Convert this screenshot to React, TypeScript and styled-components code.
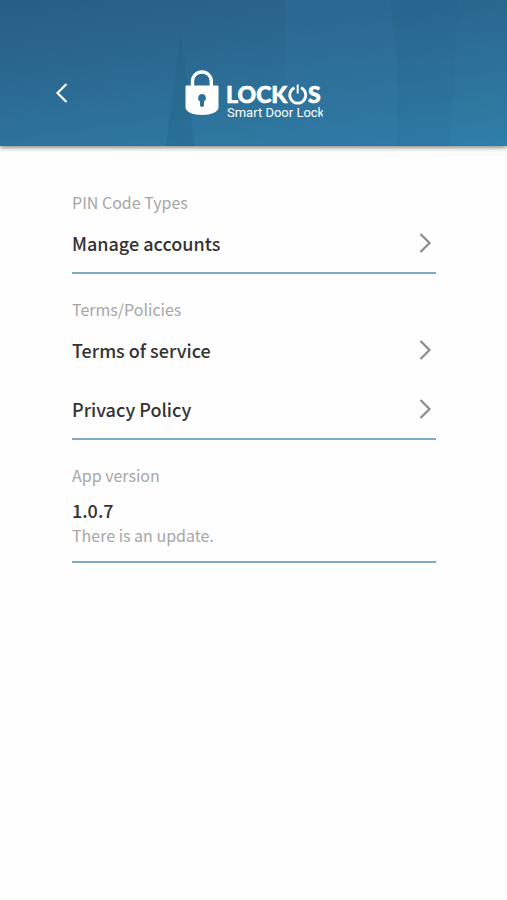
import React from "react";
import styled, { createGlobalStyle } from "styled-components";

const GlobalStyle = createGlobalStyle`
  *, *::before, *::after { box-sizing: border-box; }
  body {
    margin: 0;
    background: #fefefe;
    font-family: "Noto Sans CJK KR", "Noto Sans", sans-serif;
  }
`;

const Header = styled.header`
  position: relative;
  display: grid;
  grid-template-columns: 1fr auto 1fr;
  align-items: center;
  height: 146px;
  padding-top: 46px;
  background: linear-gradient(172deg, #275d86 0%, #2a668e 30%, #2d7199 62%, #2f7fa8 100%);
  box-shadow: 0 1px 5px rgba(0, 0, 0, 0.6);
`;

const Backdrop = styled.svg`
  position: absolute;
  inset: 0;
  width: 100%;
  height: 100%;
`;

const BackButton = styled.button`
  position: relative;
  justify-self: start;
  display: flex;
  margin: 0 0 6px 48px;
  padding: 4px;
  border: 0;
  background: none;
  color: #fff;
  cursor: pointer;
`;

const Logo = styled.svg`
  position: relative;
  display: block;
`;

const Wordmark = styled.text`
  font-family: Lato, sans-serif;
  font-size: 23px;
  font-weight: 900;
  stroke: #fff;
  stroke-width: 0.6px;
`;

const Tagline = styled.text`
  font-family: Roboto, sans-serif;
  font-size: 13px;
`;

const Content = styled.main`
  display: flex;
  flex-direction: column;
  gap: 24px;
  padding: 45px 71px 48px 72px;
`;

const Section = styled.section`
  border-bottom: 2px solid #80aac2;
`;

const Label = styled.h2`
  margin: 0;
  color: #a6a6a6;
  font-size: 16px;
  font-weight: 400;
  line-height: 22px;
`;

const Row = styled.a`
  display: flex;
  align-items: center;
  justify-content: space-between;
  height: 59px;
  color: #333;
  font-size: 18px;
  font-weight: 500;
  text-decoration: none;
`;

const Version = styled.p`
  margin: 12px 0 0;
  color: #333;
  font-size: 18px;
  font-weight: 500;
  line-height: 24px;
`;

const Note = styled.p`
  margin: 0;
  padding-bottom: 12px;
  color: #a6a6a6;
  font-size: 16px;
  line-height: 27px;
`;

const Chevron = styled.svg`
  display: block;
  margin-right: 4px;
`;

function LinkRow({ children }: { children: React.ReactNode }) {
  return (
    <Row href="#">
      {children}
      <Chevron width="14" height="22" viewBox="0 0 14 22" fill="none" stroke="#8c8c8c" strokeWidth="2.2" aria-hidden="true">
        <path d="M2.500 2 11.500 11 2.500 20" />
      </Chevron>
    </Row>
  );
}

function LockosLogo() {
  return (
    <Logo width="138" height="52" viewBox="0 0 138 52" fill="#fff" role="img" aria-label="Lockos Smart Door Lock">
      <path d="M7.5 17V11a9.400 9 0 0 1 18.800 0V17" fill="none" stroke="#fff" strokeWidth="3.400" />
      <path
        fillRule="evenodd"
        d="M1.500 15.500h31q1 0 1 1V37.500C33.500 42 26 45 17 45S.5 42 .5 37.500V16.500q0-1 1-1ZM17 24a4 4 0 0 0-2 7.400V35a2 2 0 0 0 4 0v-3.600A4 4 0 0 0 17 24Z"
      />
      <Wordmark x="41" y="33">LOCK</Wordmark>
      <path d="M109.500 17.800a8 8 0 1 0 6.500 0" fill="none" stroke="#fff" strokeWidth="2.800" />
      <path d="M112.700 14.500v9" stroke="#fff" strokeWidth="2" />
      <Wordmark x="123" y="33">S</Wordmark>
      <Tagline x="42" y="47">Smart Door Lock</Tagline>
    </Logo>
  );
}

export default function App() {
  return (
    <>
      <GlobalStyle />
      <Header>
        <Backdrop viewBox="0 0 507 146" preserveAspectRatio="none" aria-hidden="true">
          <path d="M181 30 166 146H194Z" fill="#1f5f80" opacity=".3" />
          <path d="M285 0H390L397 60V146H285Z" fill="#3278ab" opacity=".2" />
          <path d="M397 0H458L450 146H397Z" fill="#255f94" opacity=".12" />
        </Backdrop>
        <BackButton type="button" aria-label="Back">
          <svg width="20" height="22" viewBox="0 0 20 22" fill="none" stroke="currentColor" strokeWidth="2.2">
            <path d="M14.500 2 5.500 11l9 9" />
          </svg>
        </BackButton>
        <LockosLogo />
      </Header>
      <Content>
        <Section>
          <Label>PIN Code Types</Label>
          <LinkRow>Manage accounts</LinkRow>
        </Section>
        <Section>
          <Label>Terms/Policies</Label>
          <LinkRow>Terms of service</LinkRow>
          <LinkRow>Privacy Policy</LinkRow>
        </Section>
        <Section>
          <Label>App version</Label>
          <Version>1.0.7</Version>
          <Note>There is an update.</Note>
        </Section>
      </Content>
    </>
  );
}
